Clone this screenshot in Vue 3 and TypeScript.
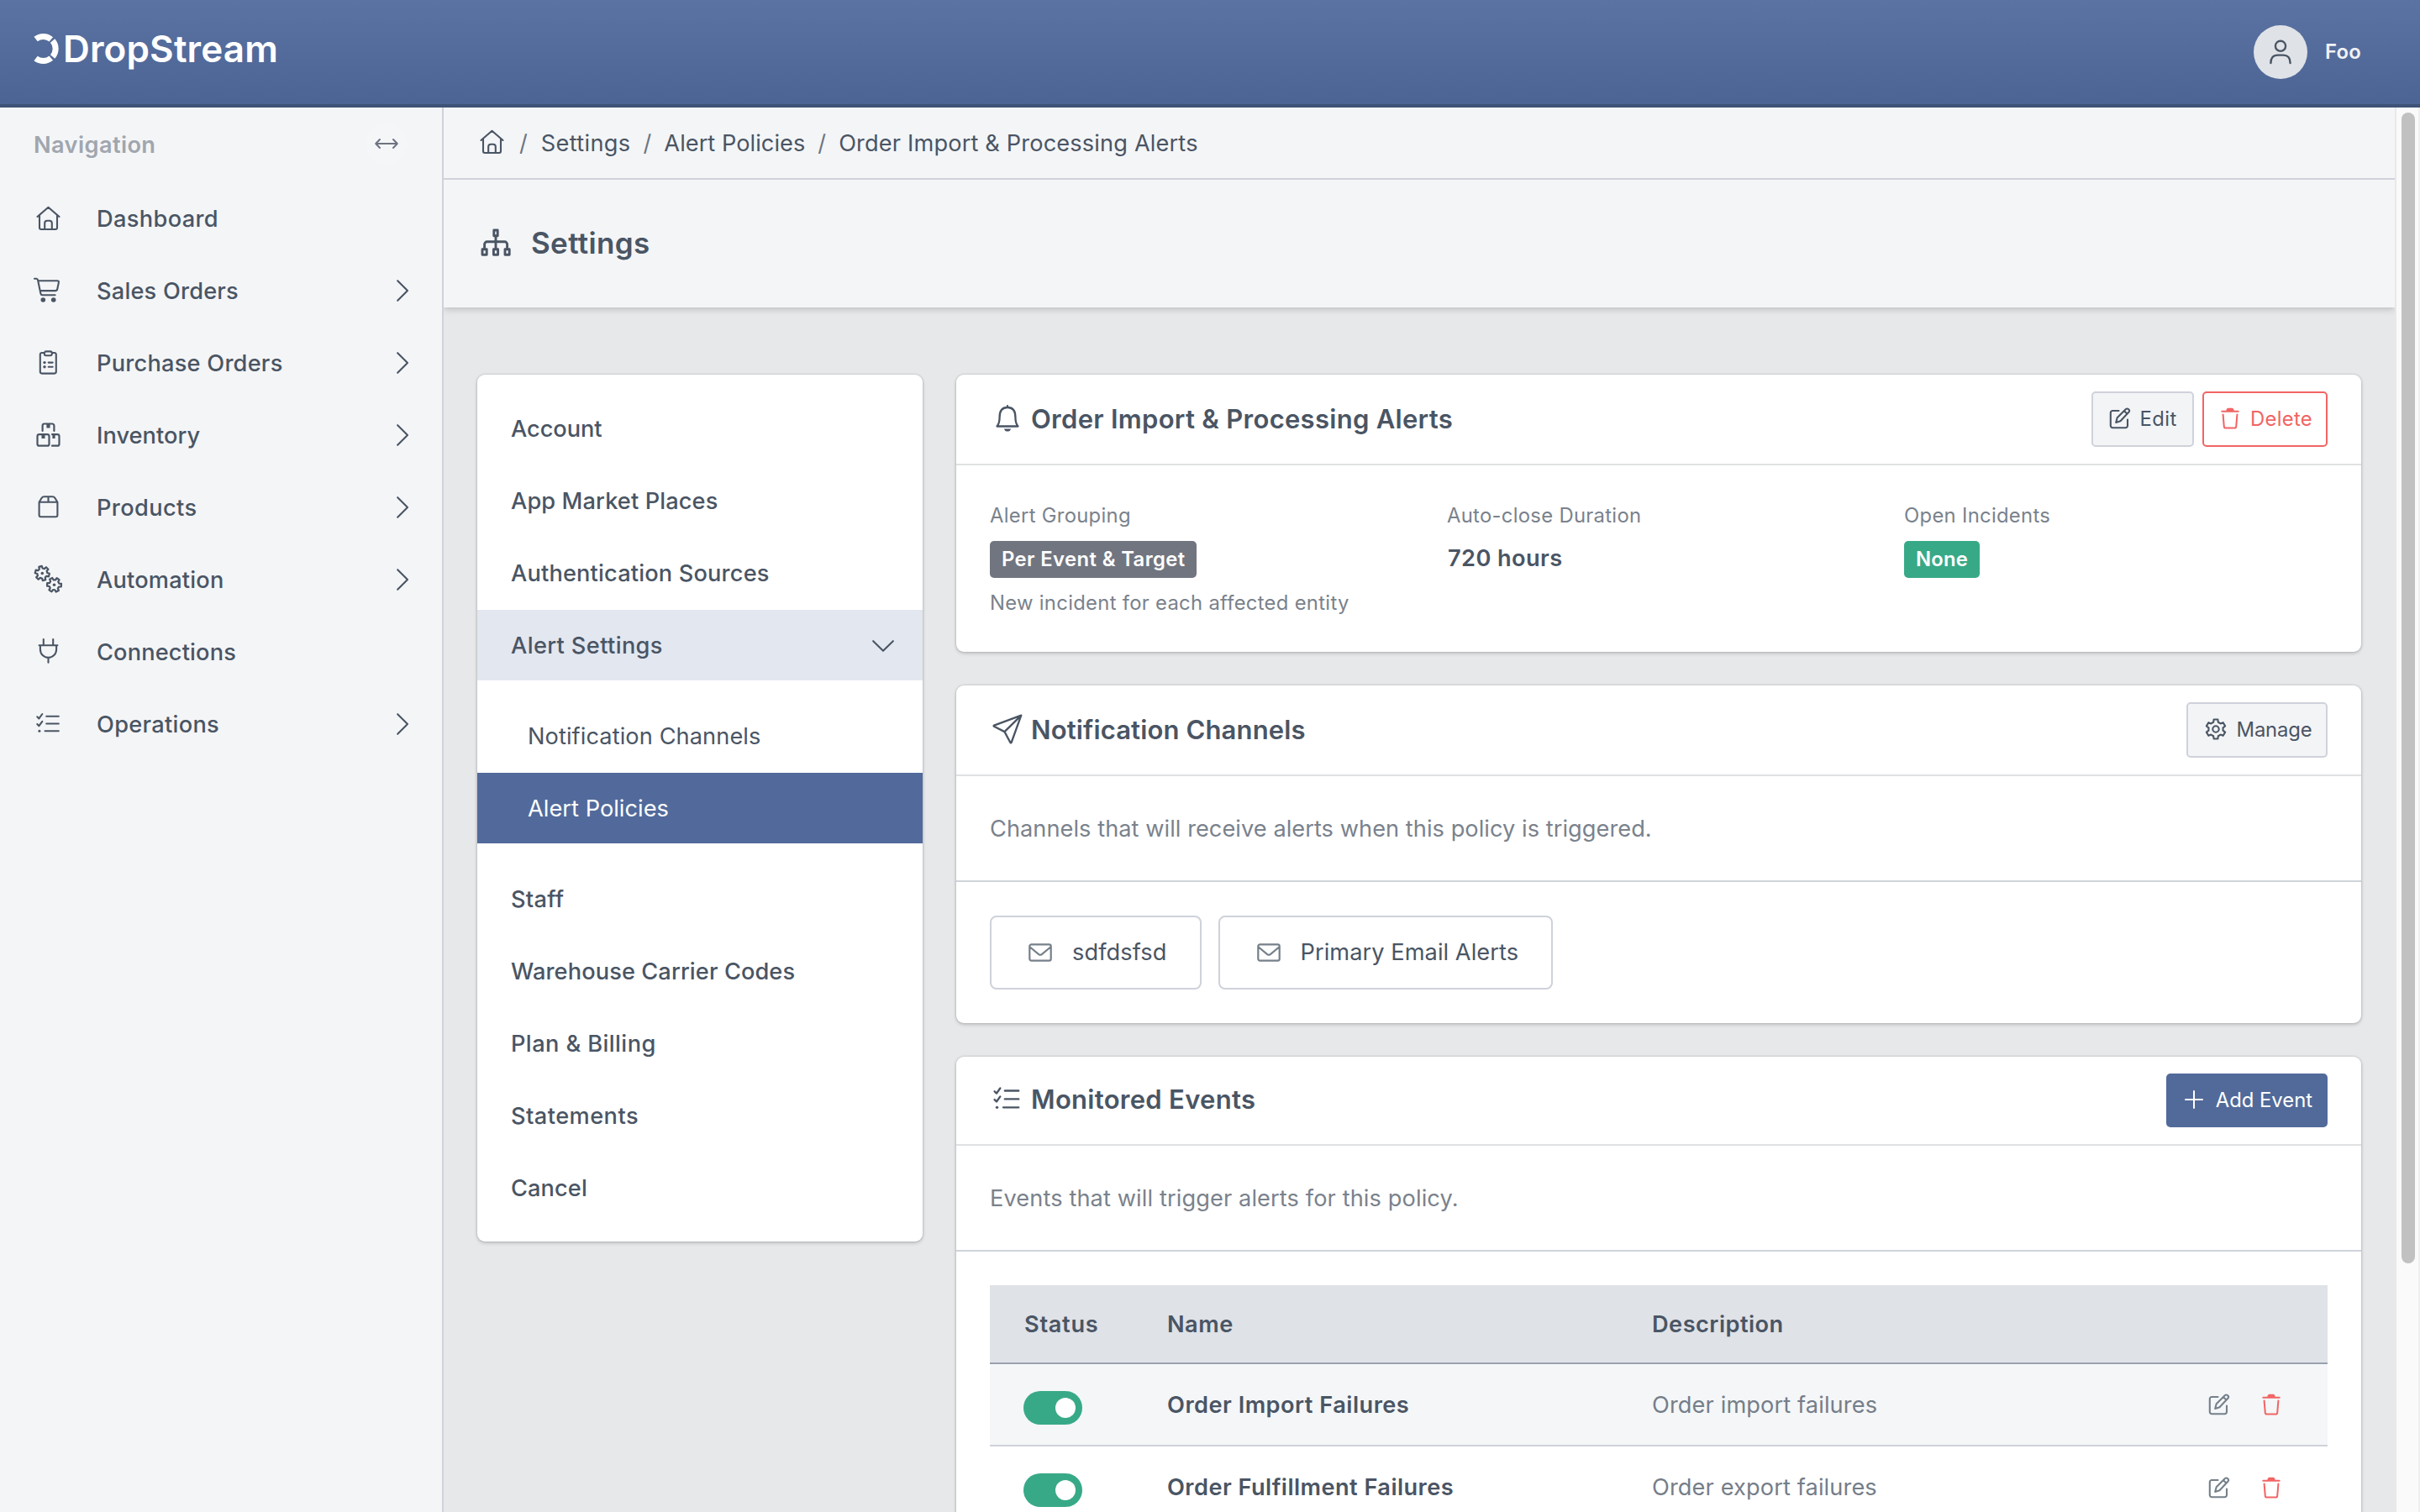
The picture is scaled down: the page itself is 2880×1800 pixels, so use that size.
<script setup lang="ts">
interface Icon { w: number; h: number; sw: number; body: string }
interface NavItem { label: string; icon: string; arrow: boolean; ls: number }
interface MenuItem { label: string; ls: number }
interface EventRow { name: string; ls: number; description: string }

/** Closed outline of a cog with softly rounded teeth. */
function cog(cx: number, cy: number, outer: number, inner: number, teeth: number, turn = 0): string {
  const points: string[] = []
  const step = (Math.PI * 2) / teeth
  const at = (r: number, a: number) => `${(cx + r * Math.cos(a)).toFixed(2)} ${(cy + r * Math.sin(a)).toFixed(2)}`
  for (let i = 0; i < teeth; i++) {
    const a = i * step + turn
    points.push(at(inner, a - step * 0.32), at(outer, a - step * 0.2), at(outer, a + step * 0.2), at(inner, a + step * 0.32))
  }
  return `<path d="M${points.join('L')}Z"/>`
}

const icons: Record<string, Icon> = {
  home: { w: 32, h: 32, sw: 2.1, body: '<path d="M2.5 14 15.5 2.8 28.5 14M5 12v15a2 2 0 0 0 2 2h17a2 2 0 0 0 2-2V12M11.2 29v-7.3a3 3 0 0 1 3-3h2.6a3 3 0 0 1 3 3V29"/>' },
  cart: { w: 32, h: 32, sw: 2.1, body: '<path d="M-1 1.8h2.4q1.3 0 1.7 1.7L6.4 19.6q.4 1.7 2 1.7H23.6M3.6 4.2h22.6q2 0 1.7 1.9l-1.7 8.2q-.4 1.8-2.4 1.8H5.7"/><g fill="currentColor" stroke="none"><circle cx="9.3" cy="27" r="2.8"/><circle cx="21.7" cy="27" r="2.8"/></g>' },
  clipboard: { w: 32, h: 32, sw: 2.1, body: '<path d="M10.5 4H7.8a2 2 0 0 0-2 2v20.6a2 2 0 0 0 2 2h15a2 2 0 0 0 2-2V6a2 2 0 0 0-2-2h-2.7M12.8 2.4h5a2 2 0 0 1 2 2v.8a2 2 0 0 1-2 2h-5a2 2 0 0 1-2-2v-.8a2 2 0 0 1 2-2zM15.7 15.6h5M15.7 20.7h5"/><g fill="currentColor" stroke="none"><circle cx="11" cy="15.6" r="1.7"/><circle cx="11" cy="20.7" r="1.7"/></g>' },
  boxes: { w: 32, h: 32, sw: 2.2, body: '<path d="M8.6 11V4.8a2.3 2.3 0 0 1 2.3-2.3h9.2a2.3 2.3 0 0 1 2.3 2.3V11M4.8 15.1h9.4a2.3 2.3 0 0 1 2.3 2.3v9a2.3 2.3 0 0 1-2.3 2.3H4.8a2.3 2.3 0 0 1-2.3-2.3v-9a2.3 2.3 0 0 1 2.3-2.3zM20 15.1h6.2a2.3 2.3 0 0 1 2.3 2.3v9a2.3 2.3 0 0 1-2.3 2.3H20"/><path d="M13.4 3h4.2v4.6h-4.2zM7.5 15.5h4v4.6h-4zM20.4 15.5h3.2v4.6h-3.2z" fill="currentColor" stroke="none"/>' },
  box: { w: 32, h: 32, sw: 2.1, body: '<path d="M4.6 9.8v15.4a2 2 0 0 0 2 2h17.8a2 2 0 0 0 2-2V9.8M4.6 9.8 7.5 5q1-1.7 3-1.7h10q2 0 3 1.7l2.9 4.8zM15.5 3.3v6.5"/>' },
  cogs: { w: 32, h: 32, sw: 2.2, body: cog(8.3, 8.5, 8.6, 6, 6, 0.25) + cog(22.5, 22.3, 8.6, 6, 6, 0.05) + '<g fill="currentColor" stroke="none"><circle cx="8.3" cy="8.5" r="1.8"/><circle cx="22.5" cy="22.3" r="1.8"/></g>' },
  plug: { w: 32, h: 32, sw: 2.1, body: '<path d="M9.8 1v7M21.2 1v7M4.6 8.2h21.8M5.9 8.4v4.9a9.6 9.6 0 0 0 19.2 0V8.4M15.5 23v5.8"/>' },
  tasks: { w: 32, h: 32, sw: 2.1, body: '<path d="M13.2 6.7h14.6M13.2 15.5h14.6M11.6 24.3h16.2M2.3 7.3l2.1 2.1L8.3 4M2.3 16.1l2.1 2.1 3.9-5.4"/><circle cx="4.9" cy="24.3" r="1.5" fill="currentColor" stroke="none"/>' },
  swap: { w: 28, h: 12, sw: 2, body: '<path d="M1.2 6h25.6M6 1 1.2 6 6 11M22 1l4.8 5-4.8 5"/>' },
  right: { w: 14, h: 26, sw: 2.1, body: '<path d="M1.2 1.2 13 13 1.2 24.8"/>' },
  down: { w: 26, h: 14, sw: 2.1, body: '<path d="M1.2 1.2 13 12.8 24.8 1.2"/>' },
  sitemap: { w: 38, h: 34, sw: 2.9, body: '<path d="M15.8 2h4.4v6.8h-4.4zM2 24.8h5.2v6.4H2zM15.4 24.8h5.2v6.4h-5.2zM29 24.8h5.2v6.4H29zM18 9v15.5M4.6 24.5v-5.7a3 3 0 0 1 3-3h21a3 3 0 0 1 3 3v5.7"/>' },
  bell: { w: 28, h: 32, sw: 2.3, body: '<path d="M1.5 25.5Q4.6 22 4.6 14.5 4.6 3 14 3t9.4 11.5Q23.4 22 26.5 25.5zM14 1.2V3"/><path d="M10 28.4h8q-1 3.2-4 3.2t-4-3.2z" fill="currentColor" stroke="none"/>' },
  plane: { w: 36, h: 36, sw: 2.3, body: '<path d="M34.3 1.6 2 13.6q-.9.5 0 1.2l12.5 6.3 6.9 12.9q.7.9 1.2 0zM34.3 1.6 14.5 21.1"/>' },
  edit: { w: 26, h: 26, sw: 2.1, body: '<path d="M11.5 4H4.2a2.4 2.4 0 0 0-2.4 2.4v15.4a2.4 2.4 0 0 0 2.4 2.4h15.4a2.4 2.4 0 0 0 2.4-2.4v-7.3M8.2 17.9l1.5-5.6L20 2q1.5-1.2 3.2.3t.3 3.2L13.5 16.2zM18 4.2l3.4 3.4"/>' },
  trash: { w: 22, h: 26, sw: 2, body: '<path d="M1.3 4.7h19.4"/><path d="M6.2 4.3q.5-3.6 2.4-3.6h4.8q1.9 0 2.4 3.6z" fill="currentColor" stroke="none"/><path d="M2.6 8.6l1.2 14.2q.2 1.8 2 1.8h10.4q1.8 0 2-1.8l1.2-14.2"/>' },
  gear: { w: 26, h: 26, sw: 2.1, body: cog(13, 13, 11.7, 8.7, 6, Math.PI / 6 + Math.PI / 3) + '<circle cx="13" cy="13" r="3.7"/>' },
  plus: { w: 22, h: 22, sw: 2, body: '<path d="M1 11h20M11 1v20"/>' },
  mail: { w: 28, h: 22, sw: 2.2, body: '<path d="M3.4 1.4h21.2a2.1 2.1 0 0 1 2.1 2.1v15a2.1 2.1 0 0 1-2.1 2.1H3.4a2.1 2.1 0 0 1-2.1-2.1v-15a2.1 2.1 0 0 1 2.1-2.1zM1.8 4.5l10.4 8.6q1.8 1.3 3.6 0L26.2 4.5"/>' },
  user: { w: 26, h: 30, sw: 2.4, body: '<circle cx="13" cy="7.8" r="6.1"/><path d="M1.4 28q0-9.4 8.4-9.4h6.4q8.4 0 8.4 9.4"/>' },
}

const nav: NavItem[] = [
  { label: 'Dashboard', icon: 'home', arrow: false, ls: 0.36 },
  { label: 'Sales Orders', icon: 'cart', arrow: true, ls: 0.2 },
  { label: 'Purchase Orders', icon: 'clipboard', arrow: true, ls: 0.24 },
  { label: 'Inventory', icon: 'boxes', arrow: true, ls: 0.05 },
  { label: 'Products', icon: 'box', arrow: true, ls: 0.38 },
  { label: 'Automation', icon: 'cogs', arrow: true, ls: 0.2 },
  { label: 'Connections', icon: 'plug', arrow: false, ls: 0.16 },
  { label: 'Operations', icon: 'tasks', arrow: true, ls: 0.3 },
]
const crumbs: MenuItem[] = [
  { label: 'Settings', ls: 0.33 },
  { label: 'Alert Policies', ls: 0.04 },
  { label: 'Order Import & Processing Alerts', ls: 0.15 },
]
const menuTop: MenuItem[] = [
  { label: 'Account', ls: -0.06 },
  { label: 'App Market Places', ls: 0.12 },
  { label: 'Authentication Sources', ls: 0.17 },
]
const menuBottom: MenuItem[] = [
  { label: 'Staff', ls: 0.3 },
  { label: 'Warehouse Carrier Codes', ls: 0.11 },
  { label: 'Plan & Billing', ls: 0.42 },
  { label: 'Statements', ls: 0.45 },
  { label: 'Cancel', ls: 0.1 },
]
const channels: MenuItem[] = [
  { label: 'sdfdsfsd', ls: 0.1 },
  { label: 'Primary Email Alerts', ls: 0.06 },
]
const events: EventRow[] = [
  { name: 'Order Import Failures', ls: 0.48, description: 'Order import failures' },
  { name: 'Order Fulfillment Failures', ls: 0.45, description: 'Order export failures' },
]

function svg(name: string) {
  const i = icons[name]
  return {
    class: 'icon',
    width: i.w,
    height: i.h,
    viewBox: `0 0 ${i.w} ${i.h}`,
    'stroke-width': i.sw,
    fill: 'none',
    stroke: 'currentColor',
    'stroke-linecap': 'round' as const,
    'stroke-linejoin': 'round' as const,
    innerHTML: i.body,
  }
}
const track = (ls: number) => ({ letterSpacing: `${ls}px` })
</script>

<template>
  <div class="app">
    <header class="topbar">
      <div class="logo">
        <svg width="36" height="40" viewBox="0 0 36 40" fill="none" stroke="#fff" stroke-width="7">
          <path d="M4.6 8.6A14.5 14.5 0 0 1 22.8 8.9M24.6 10.5A14.5 14.5 0 0 1 24.6 29.5M22.8 31.1A14.5 14.5 0 0 1 4.6 31.4" />
        </svg>
        <span>DropStream</span>
      </div>
      <div class="account">
        <span class="avatar"><svg v-bind="svg('user')"></svg></span>
        <span class="who">Foo</span>
      </div>
    </header>

    <div class="body">
      <aside class="sidebar">
        <div class="nav-head">
          <span class="nav-title">Navigation</span>
          <span class="collapse"><svg v-bind="svg('swap')"></svg></span>
        </div>
        <nav>
          <a v-for="item in nav" :key="item.label" class="nav-item">
            <svg v-bind="svg(item.icon)"></svg>
            <span class="nav-label" :style="track(item.ls)">{{ item.label }}</span>
            <svg v-if="item.arrow" v-bind="svg('right')"></svg>
          </a>
        </nav>
      </aside>

      <main class="main">
        <div class="crumbs">
          <svg v-bind="svg('home')"></svg>
          <template v-for="c in crumbs" :key="c.label">
            <span class="slash">/</span>
            <span class="crumb" :style="track(c.ls)">{{ c.label }}</span>
          </template>
        </div>
        <div class="page-head">
          <svg v-bind="svg('sitemap')"></svg>
          <h1>Settings</h1>
        </div>

        <div class="content">
          <div class="card menu">
            <a v-for="m in menuTop" :key="m.label" class="menu-item" :style="track(m.ls)">{{ m.label }}</a>
            <a class="menu-item open">
              <span>Alert Settings</span>
              <svg v-bind="svg('down')"></svg>
            </a>
            <div class="submenu">
              <a class="menu-item">Notification Channels</a>
              <a class="menu-item active">Alert Policies</a>
            </div>
            <a v-for="m in menuBottom" :key="m.label" class="menu-item" :style="track(m.ls)">{{ m.label }}</a>
          </div>

          <div class="panels">
            <section class="card policy">
              <div class="card-head">
                <span class="head-icon"><svg v-bind="svg('bell')"></svg></span>
                <h2 class="wide">Order Import &amp; Processing Alerts</h2>
                <button class="btn"><svg v-bind="svg('edit')"></svg><span>Edit</span></button>
                <button class="btn danger"><svg v-bind="svg('trash')"></svg><span>Delete</span></button>
              </div>
              <div class="facts">
                <div class="fact">
                  <div class="label">Alert Grouping</div>
                  <div class="value"><span class="badge gray">Per Event &amp; Target</span></div>
                  <div class="label note">New incident for each affected entity</div>
                </div>
                <div class="fact">
                  <div class="label">Auto-close Duration</div>
                  <div class="value hours">720 hours</div>
                </div>
                <div class="fact">
                  <div class="label">Open Incidents</div>
                  <div class="value"><span class="badge green">None</span></div>
                </div>
              </div>
            </section>

            <section class="card channels">
              <div class="card-head">
                <span class="head-icon"><svg v-bind="svg('plane')"></svg></span>
                <h2>Notification Channels</h2>
                <button class="btn manage"><svg v-bind="svg('gear')"></svg><span>Manage</span></button>
              </div>
              <p class="intro">Channels that will receive alerts when this policy is triggered.</p>
              <div class="chips">
                <span v-for="c in channels" :key="c.label" class="chip">
                  <svg v-bind="svg('mail')"></svg>
                  <span :style="track(c.ls)">{{ c.label }}</span>
                </span>
              </div>
            </section>

            <section class="card events">
              <div class="card-head">
                <span class="head-icon"><svg v-bind="svg('tasks')" width="36" height="36"></svg></span>
                <h2 class="wide">Monitored Events</h2>
                <button class="btn primary"><svg v-bind="svg('plus')"></svg><span>Add Event</span></button>
              </div>
              <p class="intro">Events that will trigger alerts for this policy.</p>
              <div class="table">
                <div class="tr th">
                  <span class="status">Status</span>
                  <span>Name</span>
                  <span>Description</span>
                </div>
                <div v-for="e in events" :key="e.name" class="tr">
                  <span class="toggle"><span class="knob"></span></span>
                  <span class="name" :style="track(e.ls)">{{ e.name }}</span>
                  <span class="desc">{{ e.description }}</span>
                  <span class="actions">
                    <svg v-bind="svg('edit')"></svg>
                    <svg v-bind="svg('trash')"></svg>
                  </span>
                </div>
              </div>
            </section>
          </div>
        </div>
      </main>

      <div class="scrollbar"><div class="thumb"></div></div>
    </div>
  </div>
</template>

<style>
body { margin: 0; overflow: hidden; }
</style>

<style scoped>
* { box-sizing: border-box; }
.app {
  width: 2880px; height: 1800px; overflow: hidden;
  display: flex; flex-direction: column;
  font-family: Inter, "Noto Sans", sans-serif;
  font-size: 27.2px; line-height: 42px; color: #4a5564; background: #e6e8ea;
}
.icon { flex: none; overflow: visible; display: block; }
h1, h2, p { margin: 0; }

.topbar {
  height: 128px; flex: none; display: flex; justify-content: space-between;
  padding: 0 70px 0 38px; border-bottom: 4px solid #3f5377;
  background: linear-gradient(#5a73a3, #4c6494); color: #fff;
}
.logo { display: flex; align-items: center; height: 116px; font-size: 44px; font-weight: 600; letter-spacing: 0.15px; }
.logo span { margin-left: 1px; }
.account { display: flex; align-items: center; font-size: 23.8px; font-weight: 600; letter-spacing: 0.3px; color: #f1f2f4; }
.avatar { width: 64px; height: 64px; border-radius: 50%; background: #dfe2e7; color: #4a5564; display: flex; align-items: center; justify-content: center; margin-right: 21px; }

.body { flex: 1; min-height: 0; display: flex; }
.sidebar { width: 528px; flex: none; border-right: 2px solid #cfd2da; background: #f4f5f7; padding-left: 42px; }
.nav-head { display: flex; justify-content: space-between; align-items: center; height: 88px; padding-right: 41px; font-weight: 600; letter-spacing: 0.4px; color: #a0a6ae; margin-left: -2px; }
.nav-title { padding-top: 2px; }
.collapse { width: 50px; height: 50px; border-radius: 50%; background: #f5f6f8; color: #6d7380; display: flex; align-items: center; justify-content: center; margin-top: -2px; }
.nav-item { display: flex; align-items: center; height: 84px; margin-bottom: 2px; padding-right: 40px; font-weight: 500; }
.nav-item:first-child { margin-top: 2px; }
.nav-label { flex: 1; margin-left: 41px; padding-top: 2px; }

.main { flex: 1; min-width: 0; display: flex; flex-direction: column; }
.crumbs { height: 86px; flex: none; display: flex; align-items: center; padding: 0 0 2px 42px; border-bottom: 2px solid #cfd2da; background: #f4f5f7; }
.slash { margin: 0 15px 0 15px; padding-top: 3px; color: #6d7580; }
.crumb { padding-top: 3px; }
.crumbs .icon + .slash { margin: 0 16px; }
.page-head { height: 152px; flex: none; display: flex; align-items: center; padding-left: 44px; background: #f4f5f7; box-shadow: 0 2px 8px rgba(0, 0, 0, 0.2); clip-path: inset(0 0 -20px 0); }
h1 { font-size: 35px; font-weight: 600; letter-spacing: 0.35px; margin: 0 0 2px 22px; }
.page-head .icon { margin-bottom: 2px; }
.content { flex: 1; min-height: 0; display: flex; align-items: flex-start; padding: 80px 40px 0; }
.card { background: #fff; border-radius: 9px; box-shadow: 0 0 3px rgba(0, 0, 0, 0.2), 0 2px 4px rgba(0, 0, 0, 0.16); }

.menu { width: 530px; flex: none; padding: 22px 0 20px; margin-right: 40px; }
.menu-item { display: flex; align-items: center; justify-content: space-between; height: 84px; margin-bottom: 2px; padding: 2px 34px 0 40px; font-weight: 500; }
.menu-item.open { background: #e3e7f0; margin-bottom: 0; letter-spacing: 0.38px; }
.submenu { padding: 24px 0; }
.submenu .menu-item { padding-left: 60px; font-weight: 400; letter-spacing: 0.09px; }
.submenu .active { background: #526a9b; color: #fff; margin-bottom: 0; letter-spacing: 0.04px; }

.panels { flex: 1; min-width: 0; display: flex; flex-direction: column; gap: 40px; }
.card-head { height: 108px; display: flex; align-items: center; padding: 0 40px; border-bottom: 2px solid #dfe1e2; }
.head-icon { width: 42px; display: flex; justify-content: center; flex: none; margin-bottom: 2px; }
h2 { flex: 1; font-size: 31px; font-weight: 600; letter-spacing: 0.14px; margin-left: 7px; }
h2.wide { letter-spacing: 0.29px; }
.btn {
  height: 66px; display: flex; align-items: center; padding: 0 18px 0 19px; margin: 0;
  border: 2px solid #cfd2da; border-radius: 5px; background: #f3f4f6;
  font: 400 23.8px/42px Inter, sans-serif; letter-spacing: 0.4px; color: #4a5564;
}
.btn .icon { margin-bottom: 2px; }
.btn span { margin-left: 11px; }
.btn.danger { margin-left: 10px; padding: 0 16px 0 20.5px; border-color: #f16564; background: #fff; color: #f16564; letter-spacing: 0.3px; }
.btn.danger span { margin-left: 13px; }
.btn.manage { letter-spacing: -0.13px; padding: 0 16.5px 0 20px; }
.btn.manage span { margin-left: 12px; }
.btn.primary { height: 64px; border: 0; padding: 0 18px 0 22px; background: #516a9a; color: #fff; letter-spacing: 0; }
.btn.primary span { margin-left: 15px; }

.policy { height: 330px; }
.facts { display: flex; padding: 39px 40px 0; }
.fact { width: 544px; flex: none; }
.label { font-size: 23.8px; line-height: 42px; letter-spacing: 0.31px; color: #7a828c; }
.value { height: 54px; display: flex; align-items: center; padding-top: 8px; line-height: 44px; }
.hours { font-weight: 600; letter-spacing: 0.4px; padding: 6px 0 0 1px; }
.note { margin-top: 8px; }
.badge { height: 44px; padding: 0 13.5px 0 14px; border-radius: 5px; color: #fff; font-size: 23.8px; font-weight: 600; letter-spacing: 0.4px; }
.gray { background: #717580; }
.green { background: #38a987; letter-spacing: 0.2px; }

.intro { height: 126px; display: flex; align-items: center; padding: 2px 40px 0; border-bottom: 2px solid #cfd3da; letter-spacing: 0.05px; color: #7a828c; }
.events .intro { letter-spacing: 0.11px; }
.chips { display: flex; gap: 20px; padding: 40px; }
.chip { height: 88px; display: flex; align-items: center; gap: 24px; padding: 0 39px 0 44px; border: 2px solid #cfd2da; border-radius: 8px; }
.chip .icon { color: #75808a; }

.events .card-head { height: 106px; }
.events h2 { margin-bottom: 2px; }
.events { height: 700px; }
.table { padding: 40px 40px 0; }
.tr { height: 98px; display: grid; grid-template-columns: 170px 577px 660px auto; align-items: center; padding-left: 41px; border-bottom: 2px solid #cfd2da; }
.tr:nth-child(2) { background: #f4f6f8; }
.tr.th { height: 94px; background: #dfe2e7; border-bottom-color: #9aa1b0; font-weight: 600; letter-spacing: 0.47px; }
.tr.th span, .name, .desc { padding-top: 2px; }
.status { letter-spacing: 0.7px; }
.name { font-weight: 600; }
.desc { letter-spacing: 0.12px; color: #757e89; }
.toggle { width: 70px; height: 40px; margin: 8px 0 0 -1px; border-radius: 20px; background: #38a987; display: flex; align-items: center; justify-content: flex-end; padding-right: 8px; }
.knob { width: 24px; height: 24px; border-radius: 50%; background: #fff; }
.actions { display: flex; gap: 38px; color: #75808a; margin: -1px 0 0 2px; }
.tr:nth-child(3) .actions { margin-top: 2px; }
.actions .icon + .icon { color: #f16564; }

.scrollbar { width: 30px; flex: none; background: #fafafa; border-left: 2px solid #e8e8e8; border-right: 2px solid #efefef; padding: 6px 0 0 6px; }
.thumb { width: 16px; height: 1370px; border-radius: 8px; background: #c1c1c1; }
</style>
